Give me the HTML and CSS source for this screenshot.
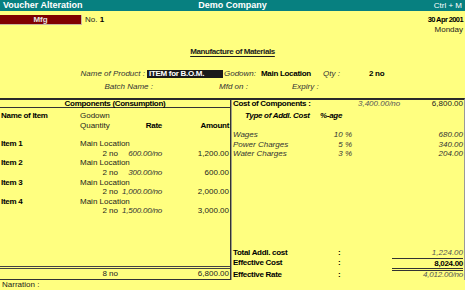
FILE: index.html
```html
<!DOCTYPE html>
<html lang="en">
<head>
  <meta charset="UTF-8">
  <meta name="viewport" content="width=device-width, initial-scale=1.0">
  <title>Voucher Alteration</title>
  <link rel="stylesheet" href="styles.css">
</head>
<body>
  <div class="titlebar">
    <span class="screen-name">Voucher Alteration</span>
    <span class="company">Demo Company</span>
    <span class="shortcut">Ctrl + M</span>
  </div>

  <div class="voucher-head">
    <div class="vtype">Mfg</div>
    <div class="vno">No. <b>1</b></div>
    <div class="vdate">
      <b>30 Apr 2001</b>
      <span>Monday</span>
    </div>
  </div>

  <h1 class="doc-title">Manufacture of Materials</h1>

  <div class="field-row">
    <span class="lbl lbl-product">Name of Product :</span>
    <span class="product-box">ITEM for B.O.M.</span>
    <span class="lbl lbl-godown">Godown:</span>
    <b class="val val-godown">Main Location</b>
    <span class="lbl lbl-qty">Qty :</span>
    <b class="val">2 no</b>
  </div>
  <div class="field-row">
    <span class="lbl lbl-batch">Batch Name :</span>
    <span class="lbl lbl-mfd">Mfd on :</span>
    <span class="lbl">Expiry :</span>
  </div>

  <div class="voucher-body">
    <section class="consumption">
      <div class="col-title">Components (Consumption)</div>
      <div class="item-grid item-head">
        <b class="c-name">Name of Item</b>
        <span class="c-godown">Godown</span>
        <span></span>
        <span class="c-qty-head">Quantity</span>
        <b class="c-rate">Rate</b>
        <b class="c-amt">Amount</b>
      </div>
      <div class="item-grid item-list">
        <b class="c-name">Item 1</b>
        <span class="c-godown">Main Location</span>
        <span></span>
        <span class="c-qty">2 no</span>
        <i class="c-rate">600.00/no</i>
        <span class="c-amt">1,200.00</span>

        <b class="c-name">Item 2</b>
        <span class="c-godown">Main Location</span>
        <span></span>
        <span class="c-qty">2 no</span>
        <i class="c-rate">300.00/no</i>
        <span class="c-amt">600.00</span>

        <b class="c-name">Item 3</b>
        <span class="c-godown">Main Location</span>
        <span></span>
        <span class="c-qty">2 no</span>
        <i class="c-rate">1,000.00/no</i>
        <span class="c-amt">2,000.00</span>

        <b class="c-name">Item 4</b>
        <span class="c-godown">Main Location</span>
        <span></span>
        <span class="c-qty">2 no</span>
        <i class="c-rate">1,500.00/no</i>
        <span class="c-amt">3,000.00</span>
      </div>
      <div class="item-grid total-row">
        <span></span>
        <span class="c-qty">8 no</span>
        <span></span>
        <span class="c-amt">6,800.00</span>
      </div>
    </section>

    <section class="costs">
      <div class="cost-head">
        <b class="cost-label">Cost of Components :</b>
        <i class="cost-rate">3,400.00/no</i>
        <span class="cost-amt">6,800.00</span>
      </div>
      <div class="addl-grid addl-head">
        <b class="a-type">Type of Addl. Cost</b>
        <b class="a-pct-head">%-age</b>
        <span></span>
      </div>
      <div class="addl-grid addl-list">
        <i>Wages</i><i class="a-pct">10 %</i><i class="a-amt">680.00</i>
        <i>Power Charges</i><i class="a-pct">5 %</i><i class="a-amt">340.00</i>
        <i>Water Charges</i><i class="a-pct">3 %</i><i class="a-amt">204.00</i>
      </div>
      <div class="summary">
        <b>Total Addl. cost</b><b class="colon">:</b><i class="s-val">1,224.00</i>
        <b>Effective Cost</b><b class="colon">:</b><b class="s-val s-eff">8,024.00</b>
        <b class="s-rate-lbl">Effective Rate</b><b class="colon s-rate-lbl">:</b><i class="s-val s-rate">4,012.00/no</i>
      </div>
    </section>
  </div>

  <div class="narration">Narration :</div>
</body>
</html>
```

FILE: styles.css
```css
body {
  margin: 0;
  background: #ffff80;
  font-family: "Liberation Sans", Arial, sans-serif;
  font-size: 8px;
  color: #1c1c1c;
  width: 465px;
  height: 290px;
  overflow: hidden;
}
b {
  color: #000;
  letter-spacing: -0.3px;
}
i {
  color: #333;
}

/* title bar */
.titlebar {
  display: grid;
  grid-template-columns: 1fr auto 1fr;
  height: 11px;
  line-height: 11px;
  background: #078080;
  color: #fff;
  font-size: 9px;
  padding: 0 3px;
}
.screen-name,
.company {
  font-weight: bold;
}
.shortcut {
  text-align: right;
  font-size: 8px;
}

/* voucher header */
.voucher-head {
  display: flex;
  margin-top: 4px;
  height: 20px;
}
.vtype {
  width: 81px;
  height: 9px;
  line-height: 9px;
  background: #800000;
  border-right: 1px solid #c8b8a0;
  border-bottom: 1px solid #c8b8a0;
  color: #e4e4e4;
  font-weight: bold;
  text-align: center;
}
.vno {
  margin-left: 3px;
  line-height: 10px;
}
.vdate {
  margin-left: auto;
  padding-right: 2px;
  display: flex;
  flex-direction: column;
  align-items: flex-end;
  line-height: 10px;
}
.vdate b {
  font-size: 7.5px;
  letter-spacing: -0.6px;
}

.doc-title {
  margin: 12px 0 0;
  font-size: 8px;
  line-height: 10px;
  text-align: center;
  letter-spacing: -0.4px;
  text-decoration: underline;
  text-underline-offset: 2px;
}

/* product fields */
.field-row {
  display: flex;
  height: 10px;
  line-height: 10px;
  margin-top: 12px;
}
.field-row + .field-row {
  margin-top: 3px;
}
.lbl {
  font-style: italic;
  color: #333;
}
.lbl-product {
  width: 145px;
  text-align: right;
}
.product-box {
  margin: 1px 0 1px 2px;
  width: 74px;
  height: 8px;
  line-height: 8px;
  padding-left: 2px;
  background: #1a1a1a;
  color: #fff;
  font-weight: bold;
  letter-spacing: -0.3px;
}
.lbl-godown {
  margin-left: 1px;
  width: 37px;
}
.val-godown {
  width: 62px;
}
.lbl-qty {
  width: 46px;
}
.lbl-batch {
  width: 153px;
  text-align: right;
}
.lbl-mfd {
  margin-left: 66px;
  width: 73px;
}

/* body */
.voucher-body {
  display: flex;
  margin-top: 6px;
  height: 182px;
  box-sizing: border-box;
  border-top: 2px solid #2a2a2a;
  border-right: 1px solid #999;
}
.consumption {
  width: 230px;
  border-right: 1px solid #333;
  display: flex;
  flex-direction: column;
}
.col-title {
  font-weight: bold;
  color: #000;
  letter-spacing: -0.3px;
  text-align: center;
  line-height: 7px;
  border-bottom: 1px solid #333;
}
.item-grid {
  display: grid;
  grid-template-columns: 79px 38px 44px 1fr;
  line-height: 9.6px;
  padding: 0 1px;
}
.item-head {
  padding-top: 3px;
}
.item-list {
  margin-top: 9px;
}
.c-godown {
  grid-column: 2 / 5;
}
.c-qty {
  text-align: right;
}
.c-rate,
.c-amt {
  text-align: right;
}
.item-list .c-rate {
  letter-spacing: -0.2px;
}
.total-row {
  margin-top: auto;
  line-height: 10px;
  border-top: 3px double #444;
  border-bottom: 1px solid #333;
}
.total-row .c-amt {
  grid-column: 4;
}

/* costs column */
.costs {
  flex: 1;
  border-left: 1px solid #a0a080;
  padding: 0 1px;
  display: flex;
  flex-direction: column;
}
.cost-head {
  display: flex;
  line-height: 7px;
  padding-bottom: 1px;
}
.cost-label {
  width: 125px;
}
.cost-rate {
  color: #555;
}
.cost-amt {
  margin-left: auto;
}
.addl-grid {
  display: grid;
  grid-template-columns: 87px 32px 1fr;
  line-height: 9.6px;
}
.addl-head {
  padding-top: 3px;
}
.a-type {
  padding-left: 12px;
  font-style: italic;
}
.a-pct-head {
  font-style: italic;
}
.addl-list {
  margin-top: 9.4px;
}
.a-pct,
.a-amt {
  text-align: right;
}
.summary {
  margin-top: auto;
  display: grid;
  grid-template-columns: 104px 55px 1fr;
  line-height: 10px;
  padding-bottom: 1px;
}
.colon {
  padding-left: 1px;
}
.s-val {
  text-align: right;
  color: #555;
}
.s-eff {
  color: #000;
  line-height: 9px;
  border-top: 1px solid #333;
  border-bottom: 3px double #333;
}
.s-rate-lbl,
.s-rate {
  line-height: 8px;
}
.s-rate {
  letter-spacing: -0.2px;
}

.narration {
  line-height: 10px;
  padding-left: 2px;
}
```
